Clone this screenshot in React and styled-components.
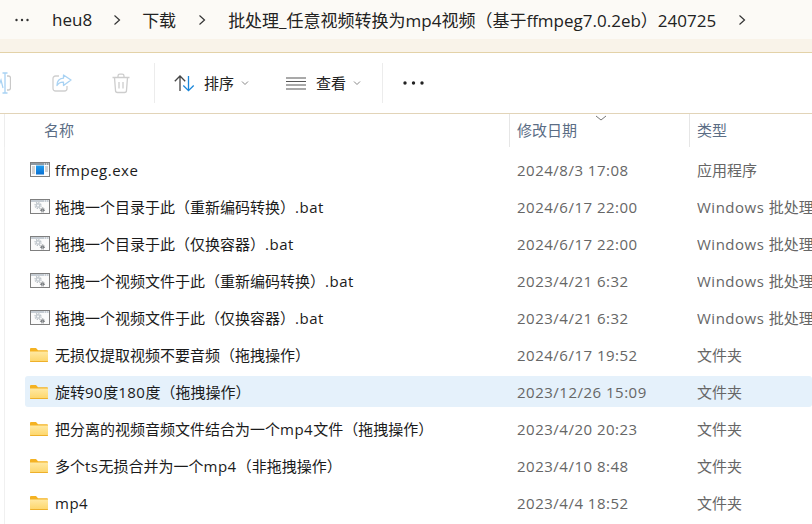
import React from "react";
import styled, { createGlobalStyle } from "styled-components";

const Global = createGlobalStyle`
  html, body { margin: 0; padding: 0; background: #fff; overflow: hidden; }
`;
const FONT = `"Open Sans", "Noto Sans CJK SC", sans-serif`;

const Page = styled.div`width: 812px; height: 524px; overflow: hidden; background: #fff; font-family: ${FONT};`;
const AddressBar = styled.div`
  height: 39px; background: #fcfaf6; display: flex; align-items: center; padding-left: 15px;
  font-size: 17px; color: #222; white-space: nowrap; box-sizing: border-box;
`;
const Crumb = styled.span`margin-left: ${p => p.$ml}px;`;
const Chevron = styled.svg`width: 8px; height: 12px; margin-left: ${p => p.$ml}px; flex: none;`;
const CaretSvg = styled.svg`width: 8px; height: 8px; margin-left: ${p => p.$ml}px; flex: none;`;
const Strip = styled.div`height: 13px; background: #f9f3e9; border-bottom: 1px solid #e3d2a8;`;
const Toolbar = styled.div`
  height: 60px; display: flex; align-items: center; border-bottom: 1px solid #e2d4b8; overflow: hidden;
`;
const IconSlot = styled.div`flex: none; margin-left: ${p => p.$ml}px; display: flex; align-items: center;`;
const Sep = styled.div`width: 1px; height: 40px; background: #ececec; margin-left: ${p => p.$ml}px; flex: none;`;
const ToolLabel = styled.span`font-size: 15px; color: #222; margin-left: ${p => p.$ml}px; padding-bottom: 2px;`;
const Dots = styled.svg`flex: none; margin-left: ${p => p.$ml}px;`;
const HeaderRow = styled.div`
  height: 33px; display: grid; grid-template-columns: 504px 180px 1fr; align-items: stretch;
  border-left: 1px solid #ededed; margin-left: 4px;
`;
const HeadCell = styled.div`
  font-size: 15px; color: #5b6d85; display: flex; align-items: center; position: relative;
  padding-left: ${p => p.$pl}px; padding-bottom: 2px; border-left: ${p => (p.$line ? "1px solid #e6e6e6" : "none")};
`;
const SortMark = styled.svg`position: absolute; left: 85px; top: 1px;`;
const List = styled.div`
  border-left: 1px solid #f0f0f0; margin-left: 4px; padding-left: 20px; padding-top: 4px; height: 373px;
`;
const Row = styled.div`
  height: 37px; display: grid; grid-template-columns: 30px 462px 180px 1fr; align-items: center;
  position: relative; white-space: nowrap; overflow: hidden;
  &::before {
    content: ""; position: absolute; left: 0; right: 0; top: 3px; bottom: 3px; border-radius: 3px;
    background: ${p => (p.$selected ? "#e5f1fb" : "transparent")};
  }
  & > * { position: relative; }
`;
const IconCell = styled.div`display: flex; align-items: center; padding-left: 5px;`;
const Name = styled.div`font-size: 15px; color: #1b1b1b;`;
const Meta = styled.div`font-size: 15px; color: #666; overflow: hidden;`;
const Latin = styled.span`letter-spacing: 0.5px;`;

const Text = ({ children }) =>
  children.split(/([\x20-\x7e]+)/).map((part, i) =>
    i % 2 ? <Latin key={i}>{part}</Latin> : part
  );

const Arrow = ({ ml }) => (
  <Chevron $ml={ml} viewBox="0 0 8 12">
    <path d="M1.500 1.500 L6.500 6 L1.500 10.500" fill="none" stroke="#333" strokeWidth="1.200" />
  </Chevron>
);
const Caret = ({ ml }) => (
  <CaretSvg $ml={ml} viewBox="0 0 8 8">
    <path d="M1 2.500 L4 5.500 L7 2.500" fill="none" stroke="#888" strokeWidth="1" />
  </CaretSvg>
);

const Frame = ({ bar, children }) => (
  <svg width="20" height="15" viewBox="0 0 20 15">
    <rect x="0.500" y="0.500" width="19" height="14" fill="#fbfbfb" stroke="#7f7f7f" />
    <rect x="1" y="1" width="18" height="2" fill={bar} />
    <path d="M14 2h1M16 2h1M18 2h.8" stroke="#fff" strokeWidth="1" />
    {children}
  </svg>
);
const ExeIcon = () => (
  <Frame bar="#8f9aa3">
    <defs>
      <linearGradient id="eg" x1="0" y1="0" x2="0" y2="1">
        <stop offset="0" stopColor="#1f9df0" />
        <stop offset="1" stopColor="#0a6fd0" />
      </linearGradient>
    </defs>
    <rect x="6" y="3.500" width="8" height="9" fill="url(#eg)" />
    <path d="M2 5h3M2 7h3M2 9h3M2 11h3M15 5h3M15 7h3M15 9h3" stroke="#a8a8a8" strokeWidth="1" />
  </Frame>
);
const BatIcon = () => (
  <Frame bar="#c5ccd3">
    <circle cx="8" cy="6.500" r="2.400" fill="#c3cad0" />
    <circle cx="8" cy="6.500" r="3" fill="none" stroke="#b5bcc2" strokeWidth="1.200" strokeDasharray="1.200 1.150" />
    <circle cx="8" cy="6.500" r="0.900" fill="#fff" />
    <circle cx="12.500" cy="11" r="1.500" fill="#62676b" />
    <circle cx="12.500" cy="11" r="2.100" fill="none" stroke="#62676b" strokeWidth="0.900" strokeDasharray="0.900 0.750" />
    <circle cx="12.500" cy="11" r="0.500" fill="#fff" />
  </Frame>
);
const FolderIcon = () => (
  <svg width="18" height="14" viewBox="0 0 18 14">
    <path d="M0 1.200C0 .5.500 0 1.200 0H6l2 2.200h8.800c.7 0 1.200.5 1.200 1.200V5H0Z" fill="#f4b223" />
    <path d="M0 3.500h18v9.300c0 .7-.5 1.200-1.200 1.200H1.200C.5 14 0 13.500 0 12.800Z" fill="url(#fg)" />
    <path d="M0 13h18v.5c0 .3-.3.5-.6.5H.6c-.3 0-.6-.2-.6-.5Z" fill="#eeb02a" />
    <defs>
      <linearGradient id="fg" x1="0" y1="0" x2="0" y2="1">
        <stop offset="0" stopColor="#ffe9a3" />
        <stop offset="1" stopColor="#fdd568" />
      </linearGradient>
    </defs>
  </svg>
);
const ICONS = { exe: ExeIcon, bat: BatIcon, dir: FolderIcon };
const BAT = "Windows 批处理";
const FILES = [
  ["exe", "ffmpeg.exe", "2024/8/3 17:08", "应用程序"],
  ["bat", "拖拽一个目录于此（重新编码转换）.bat", "2024/6/17 22:00", BAT],
  ["bat", "拖拽一个目录于此（仅换容器）.bat", "2024/6/17 22:00", BAT],
  ["bat", "拖拽一个视频文件于此（重新编码转换）.bat", "2023/4/21 6:32", BAT],
  ["bat", "拖拽一个视频文件于此（仅换容器）.bat", "2023/4/21 6:32", BAT],
  ["dir", "无损仅提取视频不要音频（拖拽操作）", "2024/6/17 19:52", "文件夹"],
  ["dir", "旋转90度180度（拖拽操作）", "2023/12/26 15:09", "文件夹", true],
  ["dir", "把分离的视频音频文件结合为一个mp4文件（拖拽操作）", "2023/4/20 20:23", "文件夹"],
  ["dir", "多个ts无损合并为一个mp4（非拖拽操作）", "2023/4/10 8:48", "文件夹"],
  ["dir", "mp4", "2023/4/4 18:52", "文件夹"],
];

export default function App() {
  return (
    <Page>
      <Global />
      <AddressBar>
        <svg width="14" height="4" viewBox="0 0 14 4"><g fill="#333"><circle cx="1.500" cy="2" r="1.200" /><circle cx="7" cy="2" r="1.200" /><circle cx="12.500" cy="2" r="1.200" /></g></svg>
        <Crumb $ml={23}>heu8</Crumb>
        <Arrow ml={21} />
        <Crumb $ml={21}>下载</Crumb>
        <Arrow ml={22} />
        <Crumb $ml={22}>批处理_任意视频转换为mp4视频（基于ffmpeg7.0.2eb）240725</Crumb>
        <Arrow ml={22} />
      </AddressBar>
      <Strip />
      <Toolbar>
        <IconSlot $ml={-10}>
          <svg width="21" height="22" viewBox="0 0 21 22" fill="none">
            <path d="M17 4h1.500A2 2 0 0 1 20.500 6v10a2 2 0 0 1-2 2H17" stroke="#c9c9c9" strokeWidth="1.300" />
            <path d="M15 1.500v19M12.500 1h2l.5.5.5-.5h2M12.500 21h2l.5-.5.5.5h2" stroke="#a8d2f3" strokeWidth="1.300" />
            <path d="M8 16l3-8 2 8" stroke="#a8d2f3" strokeWidth="1.200" />
          </svg>
        </IconSlot>
        <IconSlot $ml={41}>
          <svg width="20" height="20" viewBox="0 0 20 20" fill="none">
            <path d="M7 3H3.500A2.500 2.500 0 0 0 1 5.500v10A2.500 2.500 0 0 0 3.500 18h9a2.500 2.500 0 0 0 2.500-2.500V13" stroke="#cfcfcf" strokeWidth="1.300" />
            <path d="M11.500 2v3.200C7.500 5.500 5 8 5 12.500c1.500-2.500 3.500-3.500 6.500-3.300V12.500L19 7Z" stroke="#a8d2f3" strokeWidth="1.300" strokeLinejoin="round" />
          </svg>
        </IconSlot>
        <IconSlot $ml={40}>
          <svg width="18" height="21" viewBox="0 0 18 21" fill="none" stroke="#cdcdcd" strokeWidth="1.300">
            <path d="M.5 4.500h17M6 4.500V3a1.800 1.800 0 0 1 1.800-1.800h2.400A1.800 1.800 0 0 1 12 3v1.500" />
            <path d="M2.500 4.500l1 13a2 2 0 0 0 2 2h7a2 2 0 0 0 2-2l1-13" />
            <path d="M7 9v6.500M11 9v6.500" />
          </svg>
        </IconSlot>
        <Sep $ml={24} />
        <IconSlot $ml={19}>
          <svg width="21" height="17" viewBox="0 0 21 17" fill="none" strokeWidth="1.300">
            <path d="M6 16V1.200M.8 6.200L6 1l5.200 5.200" stroke="#444" />
            <path d="M14.500 1v14.800M9.300 10.500l5.200 5.200 5.200-5.200" stroke="#1a86d9" />
          </svg>
        </IconSlot>
        <ToolLabel $ml={9}>排序</ToolLabel>
        <Caret ml={7} />
        <IconSlot $ml={37}>
          <svg width="20" height="13" viewBox="0 0 20 13" stroke="#555" strokeWidth="1.200"><path d="M0 1h20M0 4.500h20M0 8h20M0 12h20" /></svg>
        </IconSlot>
        <ToolLabel $ml={10}>查看</ToolLabel>
        <Caret ml={7} />
        <Sep $ml={21} />
        <Dots $ml={20} width="22" height="4" viewBox="0 0 22 4"><g fill="#222"><circle cx="2" cy="2" r="1.700" /><circle cx="10.500" cy="2" r="1.700" /><circle cx="19" cy="2" r="1.700" /></g></Dots>
      </Toolbar>
      <HeaderRow>
        <HeadCell $pl={39}>名称</HeadCell>
        <HeadCell $pl={7} $line>
          <SortMark width="12" height="8" viewBox="0 0 12 8"><path d="M1 1 L6 5 L11 1" fill="none" stroke="#777" /></SortMark>
          修改日期
        </HeadCell>
        <HeadCell $pl={7} $line>类型</HeadCell>
      </HeaderRow>
      <List>
        {FILES.map(([kind, name, date, type, sel]) => {
          const I = ICONS[kind];
          return (
            <Row key={name} $selected={sel}>
              <IconCell><I /></IconCell>
              <Name><Text>{name}</Text></Name>
              <Meta><Text>{date}</Text></Meta>
              <Meta><Text>{type}</Text></Meta>
            </Row>
          );
        })}
      </List>
    </Page>
  );
}
